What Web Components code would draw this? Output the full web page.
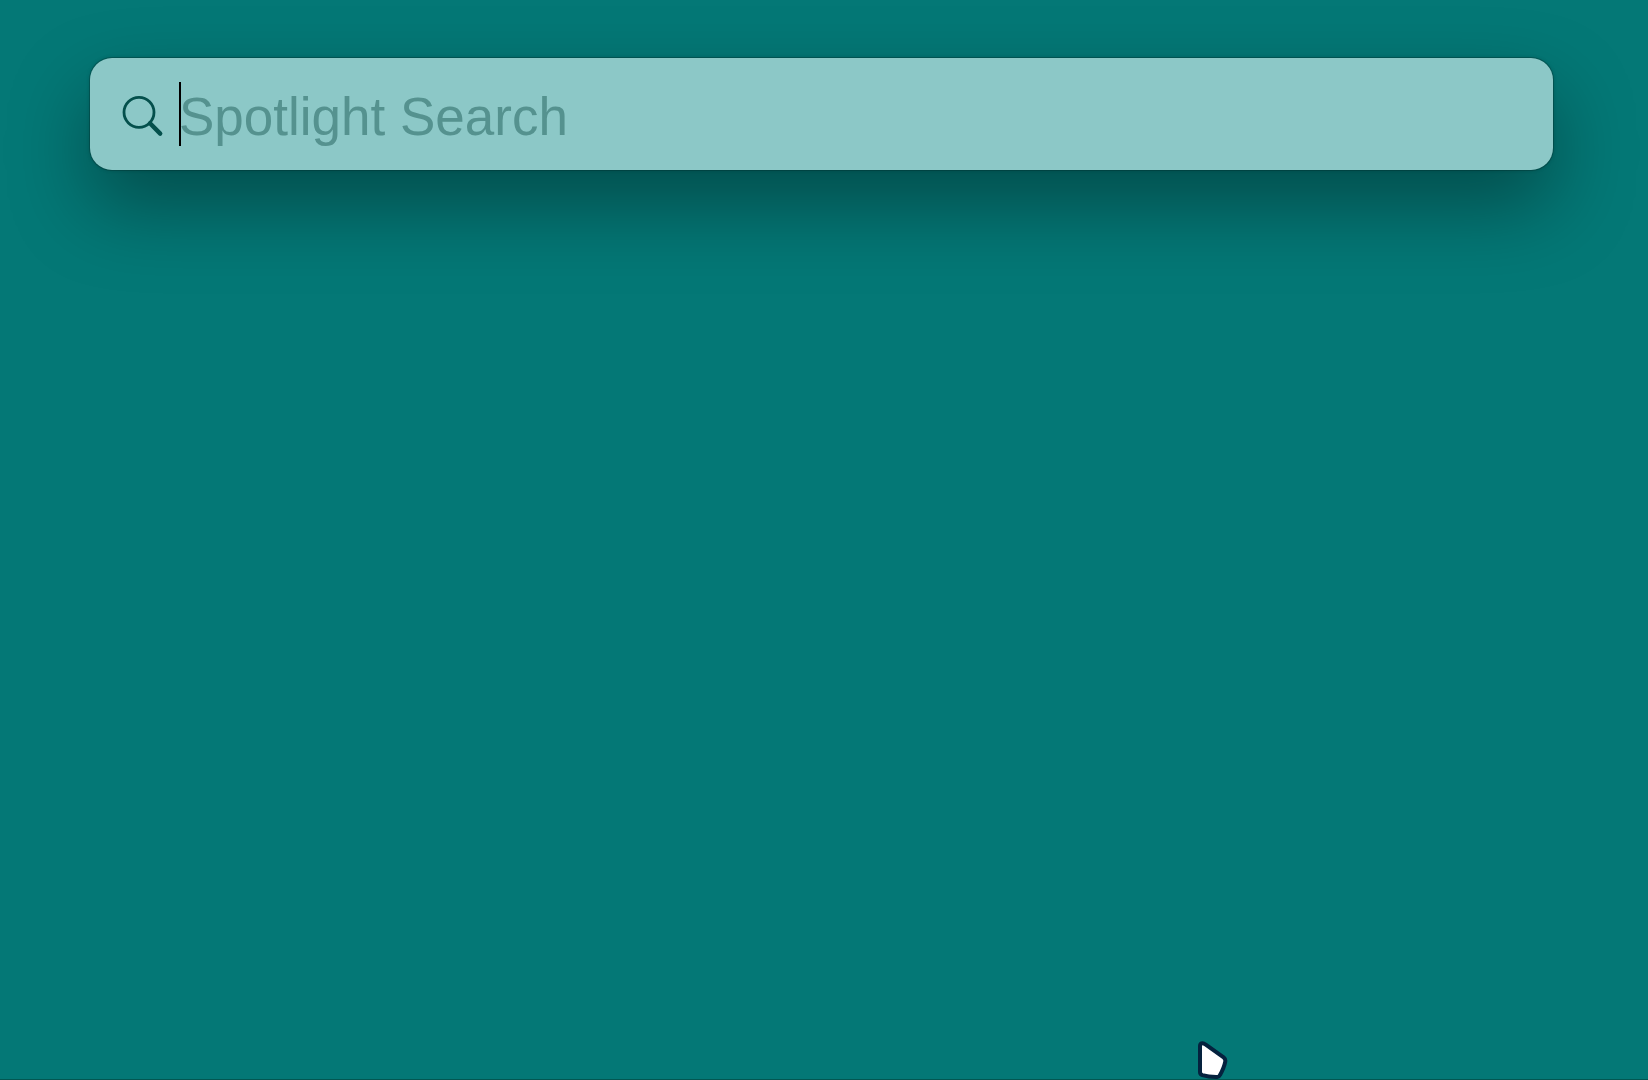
<!DOCTYPE html>
<html lang="en">
<head>
<meta charset="utf-8">
<title>Spotlight Search</title>
<style>
  html, body { height: 100%; }
  body { margin: 0; background: #047876; font-family: "Liberation Sans", sans-serif; }
</style>
</head>
<body>
<desk-top>
  <spotlight-bar placeholder="Spotlight Search"></spotlight-bar>
  <mouse-pointer slot="pointer"></mouse-pointer>
</desk-top>
<script>
class DeskTop extends HTMLElement {
  constructor() {
    super();
    this.attachShadow({ mode: "open" }).innerHTML = `
      <style>
        :host { display: block; position: relative; box-sizing: border-box; min-height: 100vh;
                padding: 58px 95px 0 90px; overflow: hidden; background: #047876; border-bottom: 1px solid #025752; }
      </style>
      <slot></slot><slot name="pointer"></slot>`;
  }
}
class SearchIcon extends HTMLElement {
  constructor() {
    super();
    this.attachShadow({ mode: "open" }).innerHTML = `
      <style>:host { display: block; flex: none; width: 42px; height: 42px; color: #04504c; } svg { display: block; overflow: visible; }</style>
      <svg width="42" height="42" viewBox="0 0 42 42" fill="none" stroke="currentColor" stroke-linecap="round" aria-hidden="true">
        <circle cx="18" cy="19.3" r="15" stroke-width="2.8"/>
        <path d="M29 30.2L39.2 40.6" stroke-width="4.4"/>
      </svg>`;
  }
}
class SpotlightBar extends HTMLElement {
  constructor() {
    super();
    this.attachShadow({ mode: "open" }).innerHTML = `
      <style>
        :host { display: block; }
        label { display: flex; align-items: center; box-sizing: border-box; height: 112px; padding: 0 32px 0 31px;
                border-radius: 22px; background: #8cc8c7;
                box-shadow: 0 0 0 1px rgba(0,50,46,.35), 0 0 4px rgba(0,0,0,.2), 0 36px 80px rgba(0,0,0,.36); }
        .caret { flex: none; width: 2px; height: 64px; margin: 0 -2px 0 16px; background: #000; }
        input { flex: 1; min-width: 0; height: 76px; box-sizing: border-box; margin: 0; padding: 4px 0 0; border: 0; outline: 0; background: none;
                font: 400 53px/72px "Liberation Sans", sans-serif; color: #04504c; caret-color: transparent; }
        input::placeholder { color: #55928f; opacity: 1; }
      </style>
      <label><search-icon></search-icon><span class="caret"></span><input type="text" aria-label="Spotlight Search"></label>`;
    this.shadowRoot.querySelector("input").placeholder = this.getAttribute("placeholder") || "";
  }
}
class MousePointer extends HTMLElement {
  constructor() {
    super();
    this.attachShadow({ mode: "open" }).innerHTML = `
      <style>:host { display: block; position: absolute; left: 1196px; bottom: 0; width: 34px; height: 39px; pointer-events: none; } svg { display: block; }</style>
      <svg width="34" height="39" viewBox="0 0 34 39" aria-hidden="true">
        <path d="M4 6Q4 3.2 6.6 3.2Q8 3.2 9.4 4.4L27.6 17.4Q29.8 19.2 29.2 21.8C28.4 26 26.4 30.6 24 35Q23 37.2 20.2 37C15 37 10.4 36.4 6.4 35.2Q4 34.4 4 32Z" fill="#fff" stroke="#05223e" stroke-width="4" stroke-linejoin="round"/>
      </svg>`;
  }
}
customElements.define("search-icon", SearchIcon);
customElements.define("desk-top", DeskTop);
customElements.define("spotlight-bar", SpotlightBar);
customElements.define("mouse-pointer", MousePointer);
</script>
</body>
</html>
